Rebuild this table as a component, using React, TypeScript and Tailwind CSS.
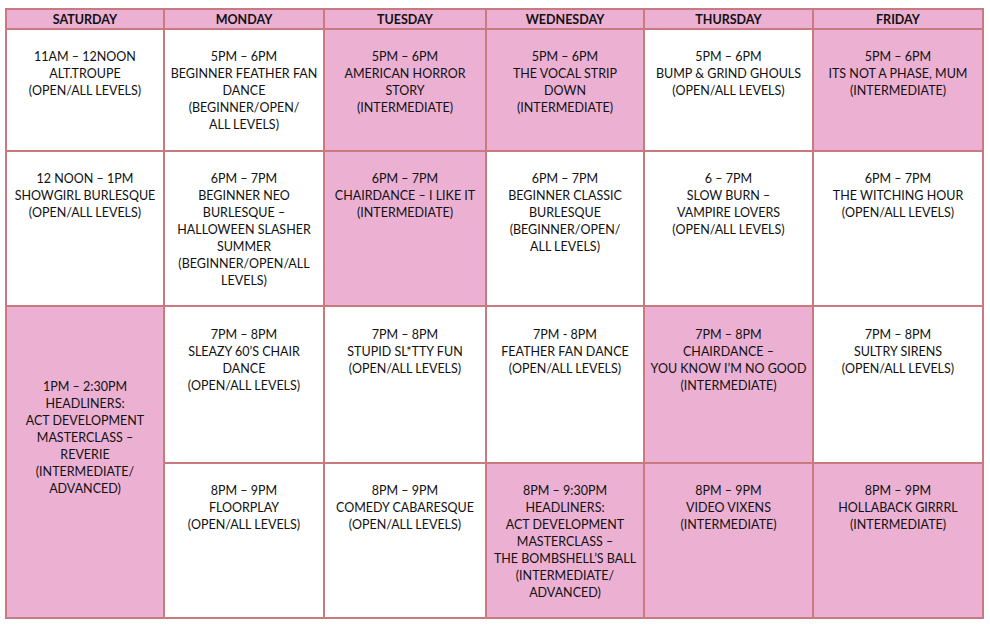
type Cell = { lines: string[]; pink?: boolean; tall?: boolean };

const days = ["SATURDAY", "MONDAY", "TUESDAY", "WEDNESDAY", "THURSDAY", "FRIDAY"];

const rows: Cell[][] = [
  [
    { lines: ["11AM – 12NOON", "ALT.TROUPE", "(OPEN/ALL LEVELS)"] },
    { lines: ["5PM – 6PM", "BEGINNER FEATHER FAN", "DANCE", "(BEGINNER/OPEN/", "ALL LEVELS)"] },
    { lines: ["5PM – 6PM", "AMERICAN HORROR", "STORY", "(INTERMEDIATE)"], pink: true },
    { lines: ["5PM – 6PM", "THE VOCAL STRIP", "DOWN", "(INTERMEDIATE)"], pink: true },
    { lines: ["5PM – 6PM", "BUMP & GRIND GHOULS", "(OPEN/ALL LEVELS)"] },
    { lines: ["5PM – 6PM", "ITS NOT A PHASE, MUM", "(INTERMEDIATE)"], pink: true },
  ],
  [
    { lines: ["12 NOON – 1PM", "SHOWGIRL BURLESQUE", "(OPEN/ALL LEVELS)"] },
    { lines: ["6PM – 7PM", "BEGINNER NEO", "BURLESQUE –", "HALLOWEEN SLASHER", "SUMMER", "(BEGINNER/OPEN/ALL", "LEVELS)"] },
    { lines: ["6PM – 7PM", "CHAIRDANCE – I LIKE IT", "(INTERMEDIATE)"], pink: true },
    { lines: ["6PM – 7PM", "BEGINNER CLASSIC", "BURLESQUE", "(BEGINNER/OPEN/", "ALL LEVELS)"] },
    { lines: ["6 – 7PM", "SLOW BURN –", "VAMPIRE LOVERS", "(OPEN/ALL LEVELS)"] },
    { lines: ["6PM – 7PM", "THE WITCHING HOUR", "(OPEN/ALL LEVELS)"] },
  ],
  [
    { lines: ["1PM – 2:30PM", "HEADLINERS:", "ACT DEVELOPMENT", "MASTERCLASS –", "REVERIE", "(INTERMEDIATE/", "ADVANCED)"], pink: true, tall: true },
    { lines: ["7PM – 8PM", "SLEAZY 60’S CHAIR", "DANCE", "(OPEN/ALL LEVELS)"] },
    { lines: ["7PM – 8PM", "STUPID SL*TTY FUN", "(OPEN/ALL LEVELS)"] },
    { lines: ["7PM - 8PM", "FEATHER FAN DANCE", "(OPEN/ALL LEVELS)"] },
    { lines: ["7PM – 8PM", "CHAIRDANCE –", "YOU KNOW I’M NO GOOD", "(INTERMEDIATE)"], pink: true },
    { lines: ["7PM – 8PM", "SULTRY SIRENS", "(OPEN/ALL LEVELS)"] },
  ],
  [
    { lines: ["8PM – 9PM", "FLOORPLAY", "(OPEN/ALL LEVELS)"] },
    { lines: ["8PM – 9PM", "COMEDY CABARESQUE", "(OPEN/ALL LEVELS)"] },
    { lines: ["8PM – 9:30PM", "HEADLINERS:", "ACT DEVELOPMENT", "MASTERCLASS –", "THE BOMBSHELL’S BALL", "(INTERMEDIATE/", "ADVANCED)"], pink: true },
    { lines: ["8PM – 9PM", "VIDEO VIXENS", "(INTERMEDIATE)"], pink: true },
    { lines: ["8PM – 9PM", "HOLLABACK GIRRRL", "(INTERMEDIATE)"], pink: true },
  ],
];

function ScheduleCell({ cell, row }: { cell: Cell; row: number }) {
  const pad = cell.tall ? "pt-[71px] " : row === 2 ? "pt-[19px] " : "pt-[18px] ";
  return (
    <div
      className={
        (cell.pink ? "bg-[#ecb0d3] " : "bg-white ") +
        (cell.tall ? "row-span-2 " : "") +
        pad +
        "flex flex-col items-center text-center"
      }
    >
      {cell.lines.map((l, i) => (
        <div key={i} className="whitespace-nowrap">
          {l}
        </div>
      ))}
    </div>
  );
}

export default function App() {
  return (
    <div className="w-[990px] h-[628px] bg-white pt-[8px] pl-[5px] font-['Lato',sans-serif] text-[12.5px] leading-[17px] text-[#111]">
      <div className="grid w-[979px] grid-cols-[156px_158px_160px_156px_167px_168px] grid-rows-[18px_120px_153px_155px_153px] gap-[2px] border-2 border-[#c97a7e] bg-[#c97a7e]">
        {days.map((d) => (
          <div key={d} className="bg-[#ecb0d3] flex items-center justify-center pt-[2px] font-bold leading-[18px]">
            {d}
          </div>
        ))}
        {rows.map((r, ri) =>
          r.map((c, ci) => <ScheduleCell key={ri + "-" + ci} cell={c} row={ri} />)
        )}
      </div>
    </div>
  );
}
